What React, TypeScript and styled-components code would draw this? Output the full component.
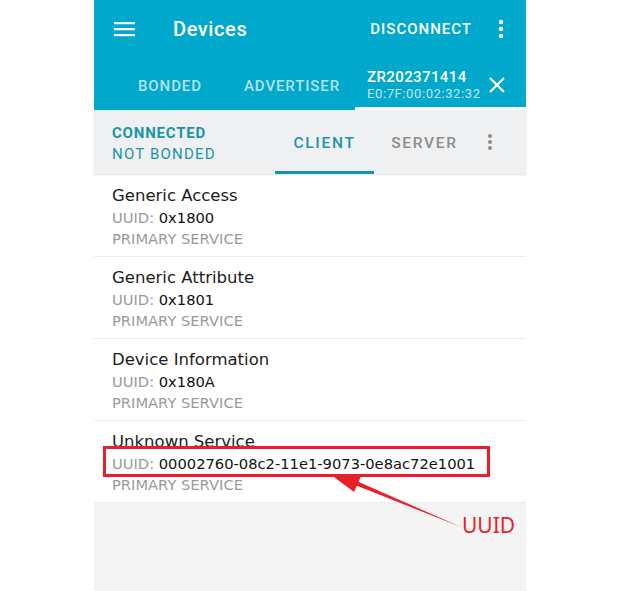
import React from "react";
import styled, { createGlobalStyle } from "styled-components";

const Global = createGlobalStyle`
  html, body { margin: 0; padding: 0; background: #ffffff; }
  body { font-family: Roboto, "Noto Sans", Arial, sans-serif; }
  * { box-sizing: border-box; }
`;

const Page = styled.div`
  position: relative;
  width: 625px;
  height: 591px;
  background: #ffffff;
  overflow: hidden;
`;

const Phone = styled.div`
  margin-left: 94px;
  width: 432px;
  height: 591px;
  display: flex;
  flex-direction: column;
  background: #f4f4f4;
`;

const AppBar = styled.header`
  background: #00a8cc;
  color: #ffffff;
  display: flex;
  flex-direction: column;
`;

const Toolbar = styled.div`
  height: 57px;
  display: flex;
  align-items: center;
  padding: 0 0 0 20px;
`;

const Title = styled.div`
  font-size: 20px;
  font-weight: 500;
  margin-left: 37px;
  flex: 1;
  letter-spacing: 0.6px;
`;

const ActionText = styled.div`
  font-size: 15px;
  font-weight: 500;
  letter-spacing: 1px;
  margin-right: 4px;
`;

const IconBox = styled.div<{ $w: number }>`
  width: ${(p) => p.$w}px;
  flex-shrink: 0;
  display: flex;
  align-items: center;
  justify-content: center;
`;

const TabsRow = styled.div`
  height: 53px;
  display: flex;
  align-items: stretch;
`;

const Tab = styled.div<{ $w: number; $pl: number }>`
  width: ${(p) => p.$w}px;
  flex-shrink: 0;
  padding-left: ${(p) => p.$pl}px;
  padding-top: 5px;
  display: flex;
  align-items: center;
  font-size: 15px;
  font-weight: 500;
  color: rgba(255, 255, 255, 0.7);
  letter-spacing: 0.9px;
  white-space: nowrap;
`;

const ActiveTab = styled.div`
  flex: 1;
  min-width: 0;
  display: flex;
  align-items: center;
  padding-left: 12px;
  border-bottom: 3px solid #ffffff;
  padding-top: 6px;
`;

const DeviceBlock = styled.div`
  flex: 1;
  min-width: 0;
  display: flex;
  flex-direction: column;
  white-space: nowrap;
`;

const DeviceName = styled.div`
  font-size: 15px;
  font-weight: 500;
  color: #ffffff;
  line-height: 16px;
  letter-spacing: 0.4px;
`;

const DeviceAddr = styled.div`
  font-size: 13px;
  color: rgba(255, 255, 255, 0.75);
  line-height: 15px;
  margin-top: 1px;
  letter-spacing: 0.6px;
`;

const StatusBar = styled.div`
  height: 64px;
  background: #eef0f2;
  display: flex;
  align-items: stretch;
  box-shadow: 0 1px 2px rgba(0, 0, 0, 0.12);
  position: relative;
  z-index: 1;
`;

const Status = styled.div`
  width: 181px;
  padding-left: 18px;
  padding-top: 3px;
  display: flex;
  flex-direction: column;
  justify-content: center;
  color: #1a94aa;
  font-size: 15px;
  line-height: 21px;
  letter-spacing: 1.2px;
`;

const StatusStrong = styled.div`
  font-weight: 700;
  letter-spacing: 0.8px;
`;

const SubTab = styled.div<{ $active?: boolean; $w: number }>`
  width: ${(p) => p.$w}px;
  display: flex;
  align-items: center;
  justify-content: center;
  font-size: 15.5px;
  font-weight: 500;
  letter-spacing: 1.7px;
  color: ${(p) => (p.$active ? "#1a94aa" : "#8c8c8c")};
  border-bottom: 3px solid ${(p) => (p.$active ? "#1595ad" : "transparent")};
  padding-top: 4px;
`;

const List = styled.div`
  background: #ffffff;
  display: flex;
  flex-direction: column;
  padding-top: 1px;
  font-family: "DejaVu Sans", Verdana, sans-serif;
`;

const Item = styled.div`
  height: 82px;
  padding: 10px 18px 0;
  border-bottom: 1px solid #ececec;
  display: flex;
  flex-direction: column;
`;

const ItemTitle = styled.div`
  font-size: 16.5px;
  color: #1c1c1c;
  line-height: 22px;
`;

const ItemLine = styled.div`
  font-size: 14.7px;
  line-height: 21px;
  color: #9a9a9a;
`;

const Value = styled.span`
  color: #111111;
`;

const RedBox = styled.div<{ $x: number; $y: number; $w: number; $h: number }>`
  position: absolute;
  left: ${(p) => p.$x}px;
  top: ${(p) => p.$y}px;
  width: ${(p) => p.$w}px;
  height: ${(p) => p.$h}px;
  border: 3px solid #e8202a;
  pointer-events: none;
`;

const Note = styled.div`
  position: absolute;
  left: 462px;
  top: 511px;
  font-family: "Noto Sans", "Liberation Sans", sans-serif;
  font-size: 21px;
  line-height: 28px;
  color: #e8202a;
`;

const ArrowSvg = styled.svg`
  position: absolute;
  left: 0;
  top: 0;
  pointer-events: none;
`;

const services = [
  { name: "Generic Access", uuid: "0x1800" },
  { name: "Generic Attribute", uuid: "0x1801" },
  { name: "Device Information", uuid: "0x180A" },
  { name: "Unknown Service", uuid: "00002760-08c2-11e1-9073-0e8ac72e1001" },
];

export default function App() {
  return (
    <Page>
      <Global />
      <Phone>
        <AppBar>
          <Toolbar>
            <svg width="22" height="16" viewBox="0 0 22 16">
              <rect x="0" y="1" width="21" height="2.2" fill="#fff" />
              <rect x="0" y="7" width="21" height="2.2" fill="#fff" />
              <rect x="0" y="13" width="21" height="2.2" fill="#fff" />
            </svg>
            <Title>Devices</Title>
            <ActionText>DISCONNECT</ActionText>
            <IconBox $w={50}>
              <svg width="6" height="20" viewBox="0 0 6 20">
                <circle cx="3" cy="3" r="2.2" fill="#fff" />
                <circle cx="3" cy="10" r="2.2" fill="#fff" />
                <circle cx="3" cy="17" r="2.2" fill="#fff" />
              </svg>
            </IconBox>
          </Toolbar>
          <TabsRow>
            <Tab $w={150} $pl={44}>BONDED</Tab>
            <Tab $w={111} $pl={0}>ADVERTISER</Tab>
            <ActiveTab>
              <DeviceBlock>
                <DeviceName>ZR202371414</DeviceName>
                <DeviceAddr>E0:7F:00:02:32:32</DeviceAddr>
              </DeviceBlock>
              <IconBox $w={58}>
                <svg width="16" height="16" viewBox="0 0 16 16">
                  <path d="M1 1 L15 15 M15 1 L1 15" stroke="#fff" strokeWidth="2.2" />
                </svg>
              </IconBox>
            </ActiveTab>
          </TabsRow>
        </AppBar>
        <StatusBar>
          <Status>
            <StatusStrong>CONNECTED</StatusStrong>
            <div>NOT BONDED</div>
          </Status>
          <SubTab $active $w={99}>CLIENT</SubTab>
          <SubTab $w={101}>SERVER</SubTab>
          <IconBox $w={30}>
            <svg width="6" height="18" viewBox="0 0 6 18">
              <circle cx="3" cy="3" r="2" fill="#8c8c8c" />
              <circle cx="3" cy="9" r="2" fill="#8c8c8c" />
              <circle cx="3" cy="15" r="2" fill="#8c8c8c" />
            </svg>
          </IconBox>
        </StatusBar>
        <List>
          {services.map((s) => (
            <Item key={s.name}>
              <ItemTitle>{s.name}</ItemTitle>
              <ItemLine>
                UUID: <Value>{s.uuid}</Value>
              </ItemLine>
              <ItemLine>PRIMARY SERVICE</ItemLine>
            </Item>
          ))}
        </List>
      </Phone>
      <RedBox $x={268} $y={123} $w={110} $h={45} />
      <RedBox $x={103} $y={446} $w={387} $h={31} />
      <ArrowSvg width="625" height="591" viewBox="0 0 625 591">
        <polygon points="461,527 350,483 352,479" fill="#e8202a" />
        <polygon points="334,477 362,474 354,492" fill="#e8202a" />
      </ArrowSvg>
      <Note>UUID</Note>
    </Page>
  );
}
